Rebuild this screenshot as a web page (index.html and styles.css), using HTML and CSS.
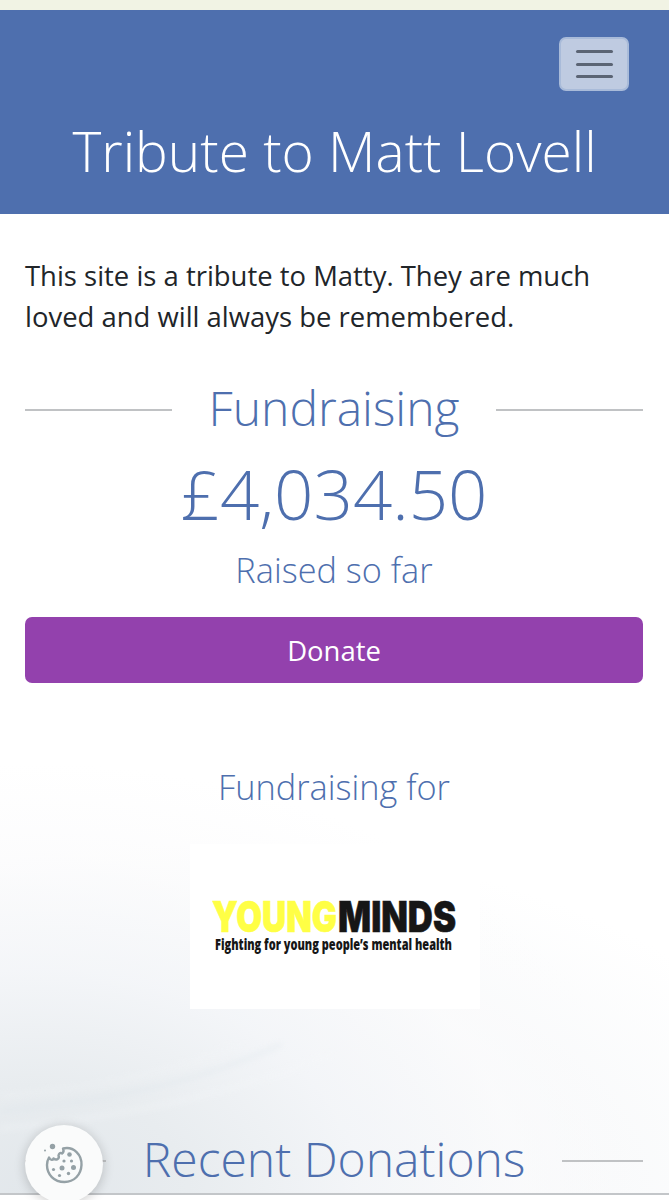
FILE: index.html
```html
<!DOCTYPE html>
<html lang="en">

<head>
  <meta charset="UTF-8">
  <meta name="viewport" content="width=device-width, initial-scale=1.0">
  <title>Tribute to Matt Lovell</title>
  <link rel="stylesheet" href="styles.css">
</head>

<body>
  <div class="page">
    <header class="header">
      <button class="menu-button" type="button" aria-label="Menu">
        <span></span>
        <span></span>
        <span></span>
      </button>
      <h1>Tribute to Matt Lovell</h1>
    </header>

    <main class="content">
      <!-- soft waves behind the lower half -->
      <svg class="waves" viewBox="0 0 669 500" aria-hidden="true">
        <g fill="none" stroke-linecap="round">
          <path d="M-20 412 Q160 400 280 345" stroke="#dbe4ea" stroke-width="4" />
          <path d="M-20 430 Q180 415 330 355" stroke="#f5f7f9" stroke-width="4" />
          <path d="M-20 397 Q140 388 240 343" stroke="#f4f6f8" stroke-width="3" />
        </g>
      </svg>

      <p class="intro">This site is a tribute to Matty. They are much loved and will always be remembered.</p>

      <h2 class="divider"><span>Fundraising</span></h2>
      <div class="amount">£4,034.50</div>
      <div class="raised">Raised so far</div>
      <a class="donate" href="#">Donate</a>

      <h3>Fundraising for</h3>
      <div class="charity">
        <svg viewBox="0 0 290 164" role="img" aria-label="YoungMinds">
          <g class="logo-name">
            <text x="22" y="88" fill="#ffff45" stroke="#ffff45" textLength="125" lengthAdjust="spacingAndGlyphs">YOUNG</text>
            <text x="148" y="88" fill="#161616" stroke="#161616" textLength="118" lengthAdjust="spacingAndGlyphs">MINDS</text>
          </g>
          <text class="logo-line" x="25" y="106" textLength="237" lengthAdjust="spacingAndGlyphs">Fighting for young people’s mental health</text>
        </svg>
      </div>

      <h2 class="divider recent"><span>Recent Donations</span></h2>
    </main>
    <div class="bottom-bar"></div>

    <button class="cookies" type="button" aria-label="Cookie settings">
      <svg viewBox="0 0 40 42" aria-hidden="true">
        <path d="M19 5.500C30 3 38 12 37.500 22C37 32 30 39 20.500 39C10 39 3 31.500 3 22C3 19 3.500 17 5 14.500C6.500 18 9 17 9.500 15.500C12 17.500 16 16 14.500 12.500C15 10 16 9.500 18 10.500C20 9 20 7.500 19 5.500Z" />
        <g>
          <circle cx="8.500" cy="3.500" r="2.700" />
          <circle cx="1" cy="7.500" r="1" />
          <circle cx="25.500" cy="11.500" r="2.300" />
          <circle cx="20" cy="18" r="1.600" />
          <circle cx="27.500" cy="18" r="1.600" />
          <circle cx="9.500" cy="26.500" r="1.600" />
          <circle cx="18" cy="25" r="2.500" />
          <circle cx="29.500" cy="24.500" r="2.500" />
          <circle cx="24.500" cy="30.500" r="1.700" />
          <circle cx="15.500" cy="32.500" r="1.600" />
        </g>
      </svg>
    </button>
  </div>
</body>

</html>
```

FILE: styles.css
```css
* {
  box-sizing: border-box;
}

body {
  margin: 0;
  background-color: #fff;
  color: #212529;
  font-family: "Open Sans", sans-serif;
  font-size: 27.45px;
  line-height: 41px;
}

h1,
h2,
h3,
p {
  margin: 0;
  font-weight: 300;
}

.page {
  position: relative;
  height: 1200px;
  overflow: hidden;
  border-top: 10px solid #f1f3e4;
}

.header {
  height: 204px;
  padding: 27px 40px 0;
  background-color: #4e6fae;
  color: #fff;
  display: flex;
  flex-direction: column;
}

.menu-button {
  align-self: flex-end;
  width: 70px;
  height: 54px;
  padding: 0;
  border: 2px solid #a9bbd9;
  border-radius: 7px;
  background-color: #bfcbe1;
  display: flex;
  flex-direction: column;
  align-items: center;
  justify-content: center;
  gap: 9.5px;
}

.menu-button span {
  width: 37px;
  height: 3px;
  border-radius: 2px;
  background-color: #5b6474;
}

h1 {
  margin-top: 26px;
  font-size: 55px;
  line-height: 68px;
  text-align: center;
  white-space: nowrap;
}

.content {
  position: relative;
  height: 979px;
  padding: 41px 26px 0 25px;
  text-align: center;
  background:
    radial-gradient(ellipse 620px 430px at 5% 100%, #e2e7eb 0%, #e8ecef 25%, rgba(243, 245, 248, 0.85) 52%, rgba(251, 251, 252, 0.7) 78%, rgba(255, 255, 255, 0) 100%),
    radial-gradient(ellipse 640px 350px at 30% 100%, #eef1f4 0%, rgba(255, 255, 255, 0) 100%),
    #fff;
}

.waves {
  position: absolute;
  left: 0;
  bottom: -7px;
  width: 669px;
  height: 500px;
  opacity: 0.4;
  filter: blur(3px);
}

.content > :not(.waves) {
  position: relative;
}

.intro {
  font-weight: 400;
  text-align: left;
}

.divider {
  display: flex;
  align-items: center;
  gap: 37px;
  margin-top: 42px;
  color: #4e6fae;
  font-size: 48px;
  line-height: 58px;
  white-space: nowrap;
}

.divider::before,
.divider::after {
  content: "";
  flex: 1;
  height: 2px;
  margin-top: 3px;
  background-color: #c0c2c4;
}

.amount {
  margin-top: 14px;
  color: #4e6fae;
  font-size: 69px;
  font-weight: 300;
  line-height: 84px;
}

.raised,
h3 {
  color: #4e6fae;
  font-size: 34.3px;
  font-weight: 300;
  line-height: 42px;
}

.raised {
  margin-top: 14px;
}

.donate {
  display: block;
  height: 66px;
  margin-top: 26px;
  border-radius: 7px;
  background-color: #9341ad;
  color: #fff;
  line-height: 67px;
  text-decoration: none;
}

h3 {
  margin-top: 83px;
}

.charity {
  width: 290px;
  height: 165px;
  margin: 36px auto 0;
  background-color: #fff;
  transform: translateX(1px);
}

.charity svg {
  display: block;
}

.logo-name {
  font-family: Inter, sans-serif;
  font-size: 42px;
  font-weight: 900;
  stroke-width: 0.6;
}

.logo-line {
  fill: #161616;
  font-size: 15px;
  font-weight: 800;
}

.recent {
  margin-top: 121px;
}

.bottom-bar {
  height: 8px;
  border-top: 2px solid #c3c6c9;
  background-color: #fff;
}

.cookies {
  position: absolute;
  left: 25px;
  top: 1115px;
  width: 78px;
  height: 78px;
  padding: 0;
  border: 0;
  border-radius: 50%;
  background-color: #fafbfb;
  box-shadow: 0 2px 12px rgba(0, 0, 0, 0.2);
}

.cookies svg {
  display: block;
  width: 40px;
  height: 42px;
  margin: 0 auto;
  fill: #95a1a6;
}

.cookies path {
  fill: none;
  stroke: #95a1a6;
  stroke-width: 2.4;
  stroke-linejoin: round;
}
```
